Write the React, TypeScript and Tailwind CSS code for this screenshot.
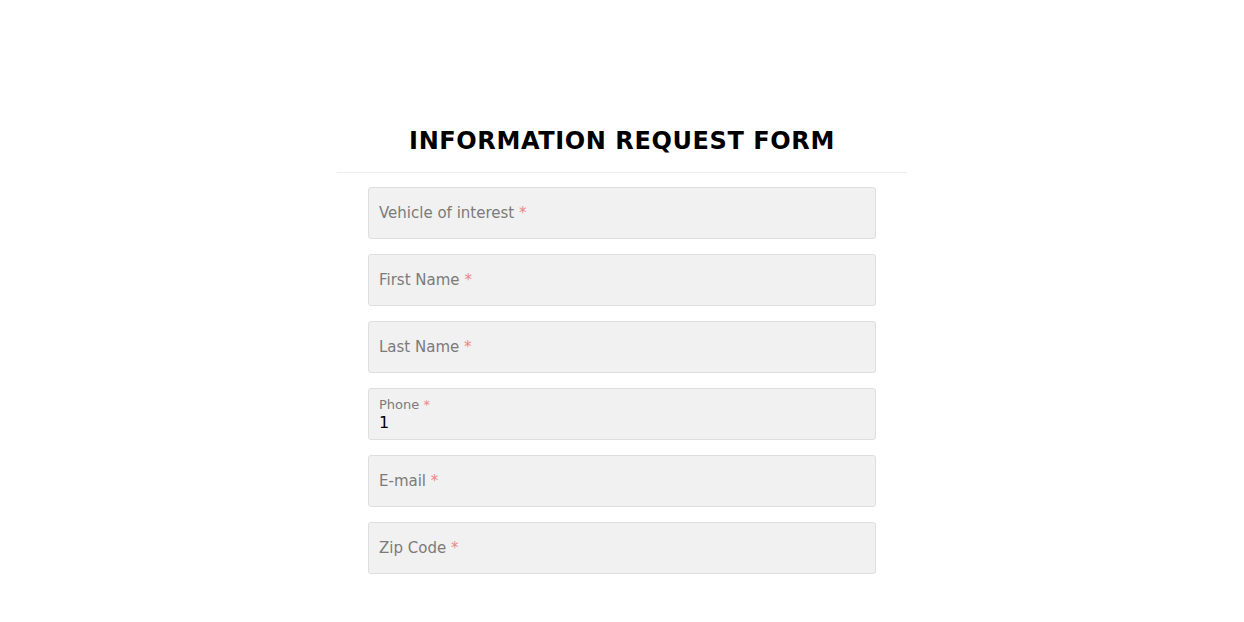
const fields = [
  { label: 'Vehicle of interest' },
  { label: 'First Name' },
  { label: 'Last Name' },
  { label: 'Phone', value: '1' },
  { label: 'E-mail' },
  { label: 'Zip Code' },
]

const Field: React.FC<{ label: string; value?: string }> = ({ label, value }) => {
  if (value) {
    return (
      <div className="w-full h-[52px] flex flex-col justify-center pt-[2px] px-[10px] bg-[#f1f1f1] border border-[#dedede] rounded-[3px]">
        <p className="text-[13px] leading-[16px] text-[#7b7b7b]">
          {label} <span className="text-[#ec8585]">*</span>
        </p>
        <p className="text-[16px] leading-[20px] text-black">{value}</p>
      </div>
    )
  }

  return (
    <div className="w-full h-[52px] flex items-center px-[10px] bg-[#f1f1f1] border border-[#dedede] rounded-[3px]">
      <p className="text-[15px] text-[#7b7b7b]">
        {label} <span className="text-[#ec8585]">*</span>
      </p>
    </div>
  )
}

export default function App() {
  return (
    <div className="w-full min-h-[622px] bg-white flex justify-center font-['DejaVu_Sans',sans-serif]">
      <div className="w-[570px] flex flex-col pt-[125px]">
        <h1 className="text-center text-[24px] leading-[32px] font-bold tracking-[0.6px] text-black">
          INFORMATION REQUEST FORM
        </h1>
        <div className="mt-[15px] border-b border-[#ececec]" />
        <div className="flex flex-col gap-[15px] px-[31px] pt-[14px]">
          {fields.map((f) => (
            <Field key={f.label} label={f.label} value={f.value} />
          ))}
        </div>
      </div>
    </div>
  )
}
